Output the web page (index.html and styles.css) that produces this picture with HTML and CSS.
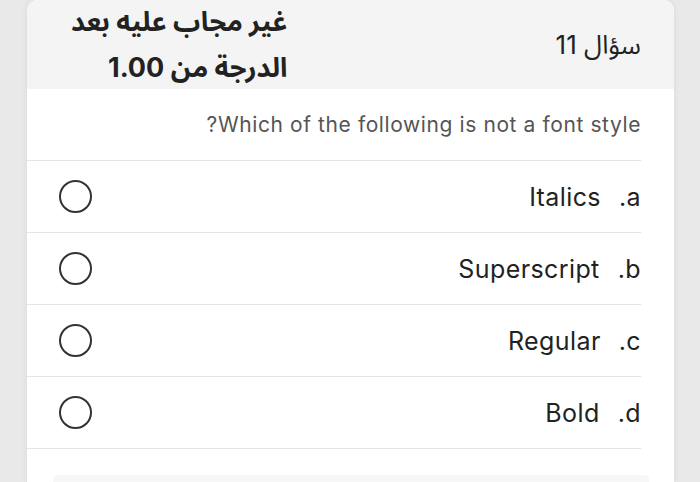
FILE: index.html
```html
<!DOCTYPE html>
<html lang="ar" dir="rtl">
<head>
<meta charset="utf-8">
<link rel="stylesheet" href="styles.css">
</head>
<body>
<div class="page">
  <div class="card">
    <div class="header">
      <div class="qno">سؤال 11</div>
      <div class="status">
        <div class="line">غير مجاب عليه بعد</div>
        <div class="line">الدرجة من 1.00</div>
      </div>
    </div>
    <div class="body">
      <div class="question">Which of the following is not a font style?</div>
      <div class="option"><span class="num">a.</span><span class="label">Italics</span><span class="radio"></span></div>
      <div class="option"><span class="num">b.</span><span class="label">Superscript</span><span class="radio"></span></div>
      <div class="option"><span class="num">c.</span><span class="label">Regular</span><span class="radio"></span></div>
      <div class="option"><span class="num">d.</span><span class="label">Bold</span><span class="radio"></span></div>
      <div class="footer-box"></div>
    </div>
  </div>
</div>
</body>
</html>
```

FILE: styles.css
```css
html, body {
  margin: 0;
  padding: 0;
  height: 100%;
  overflow: hidden;
}
body {
  background: #e9e9e9;
  font-family: "Inter", "Noto Sans Arabic", "DejaVu Sans", sans-serif;
  color: #222;
}
.page {
  display: flex;
  justify-content: flex-end;
  padding-right: 26px;
  padding-left: 27px;
  height: 100%;
}
.card {
  flex: 1;
  background: #fff;
  border-radius: 10px 10px 0 0;
  box-shadow: 0 0 6px rgba(0,0,0,0.08);
  display: flex;
  flex-direction: column;
}
.header {
  height: 89px;
  background: #f4f4f4;
  border-radius: 10px 10px 0 0;
  display: flex;
  justify-content: space-between;
  align-items: center;
  padding: 0 33px 0 44px;
  box-sizing: border-box;
}
.qno {
  font-size: 26px;
  color: #222;
  padding-top: 2px;
}
.status {
  font-size: 27px;
  font-weight: 700;
  color: #222;
  line-height: 46px;
}
.body {
  padding-right: 33px;
  display: flex;
  flex-direction: column;
  flex: 1;
}
.question {
  height: 71px;
  border-bottom: 1px solid #e4e4e4;
  display: flex;
  align-items: center;
  font-size: 21px;
  letter-spacing: 0.6px;
  color: #555;
}
.option {
  height: 71px;
  border-bottom: 1px solid #e4e4e4;
  display: flex;
  align-items: center;
  font-size: 25px;
  letter-spacing: 0.4px;
  color: #222;
}
.num {
  margin-left: 18px;
}
.label {
  flex: 1;
}
.radio {
  width: 29px;
  height: 29px;
  border: 2px solid #333;
  border-radius: 50%;
  margin-left: 32px;
}
.footer-box {
  margin: 26px -8px 0 26px;
  flex: 1;
  background: #f7f7f7;
  border-radius: 4px 4px 0 0;
}
```
